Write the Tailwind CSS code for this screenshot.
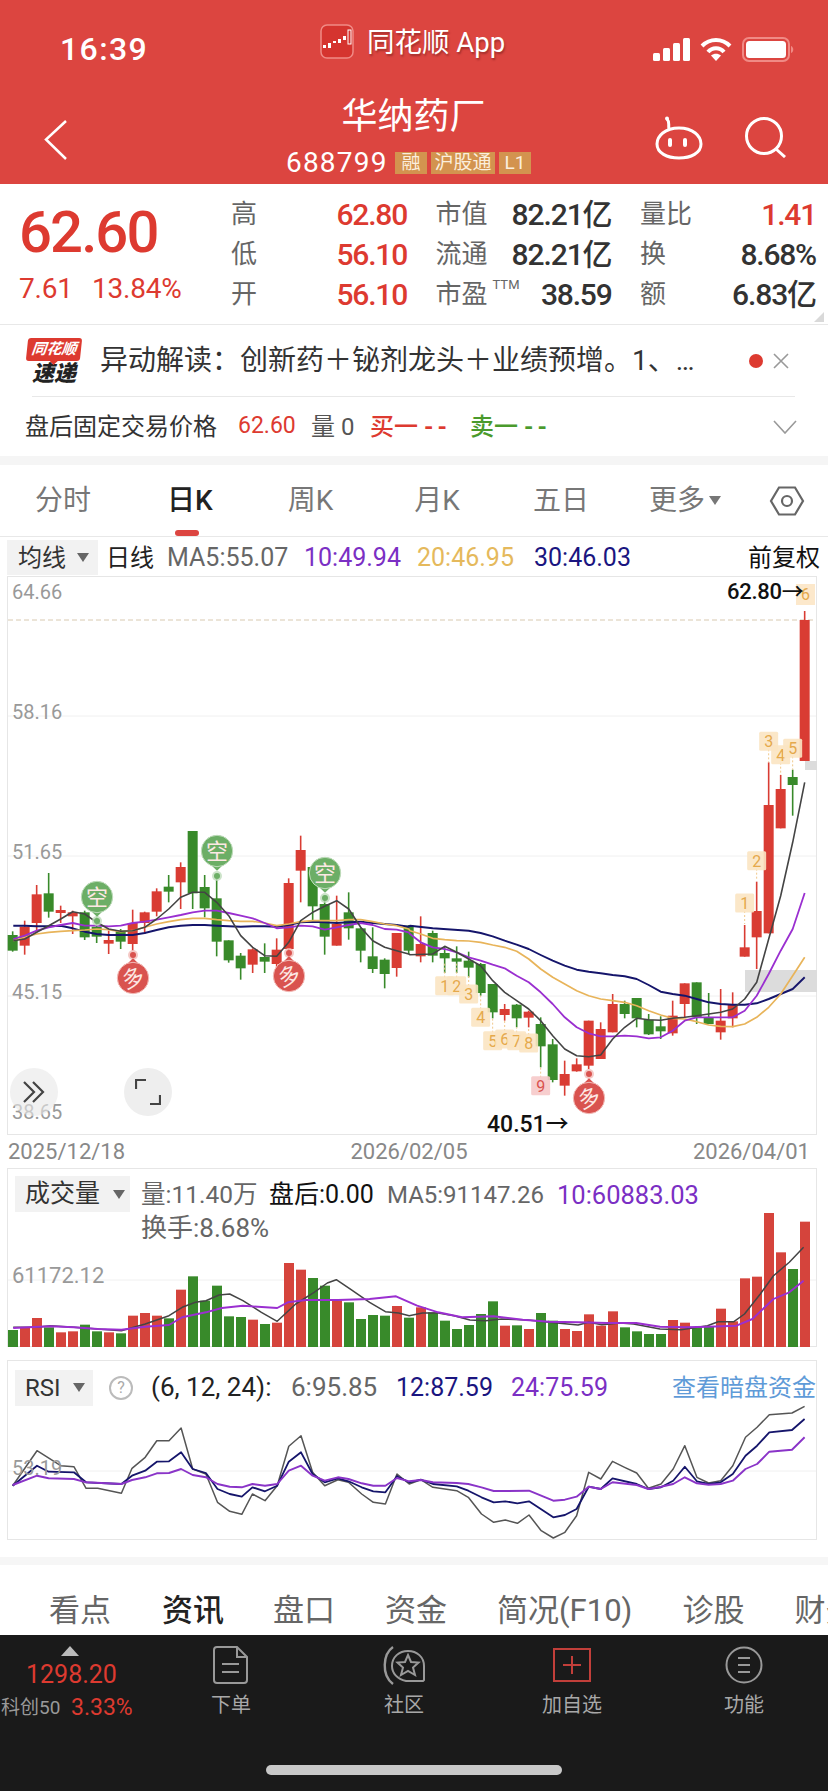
<!DOCTYPE html>
<html lang="zh-CN">
<head>
<meta charset="UTF-8">
<meta name="viewport" content="width=device-width, initial-scale=1.0">
<title>华纳药厂</title>
<script src="https://cdn.jsdelivr.net/npm/@tailwindcss/browser@4"></script>
</head>
<body class="bg-white w-[828px] h-[1792px] overflow-hidden [font-family:Roboto,'Noto_Sans_CJK_SC',sans-serif] text-[#333]">

<!-- 顶部红色区域 -->
<header class="bg-[#dc4540] h-[184px] text-white">
  <div class="flex h-[90px]">
    <div class="w-[320px] pl-[60px] pt-[30px] text-[32px] leading-[38px] font-medium tracking-[1.4px]">16:39</div>
    <div class="w-[333px] flex items-start pt-[24px] gap-[13px]">
      <svg width="34" height="35" viewBox="0 0 34 35">
        <rect x="1" y="1" width="32" height="33" rx="6" fill="#d5342f" stroke="#f08a85" stroke-width="1.5"/>
        <g fill="#fff"><rect x="3" y="21" width="3" height="3"/><rect x="8" y="19" width="3" height="5"/><rect x="13" y="17" width="3" height="2"/><rect x="18" y="15" width="3" height="4"/><rect x="23" y="12" width="3" height="4"/></g>
        <rect x="28" y="6" width="3" height="14" fill="none" stroke="#fff" stroke-width="1"/>
      </svg>
      <div class="text-[27.5px] leading-[38px] [text-shadow:1px_2px_2px_rgba(90,20,20,0.45)]">同花顺 App</div>
    </div>
    <div class="flex items-start pt-[38px] gap-[10px]">
      <svg width="37" height="23" viewBox="0 0 37 23" fill="#fff">
        <rect x="0" y="15" width="7" height="8" rx="1.5"/><rect x="10" y="10" width="7" height="13" rx="1.5"/><rect x="20" y="5" width="7" height="18" rx="1.5"/><rect x="30" y="0" width="7" height="23" rx="1.5"/>
      </svg>
      <svg width="32" height="23" viewBox="0 0 32 23" fill="none" stroke="#fff" stroke-width="4">
        <path d="M2 8 C10 0 22 0 30 8"/><path d="M8 14 C12 9 20 9 24 14"/><path d="M16 23 L11 17.5 C14 15 18 15 21 17.5 Z" fill="#fff" stroke="none"/>
      </svg>
      <svg width="53" height="25" viewBox="0 0 53 25" class="-mt-px">
        <rect x="1" y="1" width="46" height="23" rx="6" fill="none" stroke="#f08a85" stroke-width="2"/>
        <rect x="4" y="4" width="40" height="17" rx="3.5" fill="#fff"/>
        <path d="M49 9 C52 10 52 15 49 16 Z" fill="#f08a85"/>
      </svg>
    </div>
  </div>
  <div class="flex h-[94px]">
    <div class="w-[286px] pl-[44px] pt-[30px]">
      <svg width="24" height="40" viewBox="0 0 24 40" fill="none" stroke="#fff" stroke-width="2.5"><path d="M22 1 L2 19.5 L22 39"/></svg>
    </div>
    <div class="w-[245px] flex flex-col items-center">
      <div class="text-[36px] leading-[44px] ml-[10px] mt-[5px]">华纳药厂</div>
      <div class="flex items-center mt-[13px] h-[22px] text-[28px]">
        <span class="w-[109px] leading-[22px] tracking-[1.2px]">688799</span>
        <span class="flex items-center justify-center bg-[#d3934f] w-[32px] h-[22px] mr-[4px] text-[19px] text-[#fbeedd]">融</span>
        <span class="flex items-center justify-center bg-[#d3934f] w-[64px] h-[22px] mr-[4px] text-[19px] text-[#fbeedd]">沪股通</span>
        <span class="flex items-center justify-center bg-[#d3934f] w-[32px] h-[22px] text-[19px] text-[#fbeedd]">L1</span>
      </div>
    </div>
    <div class="flex items-start pl-[124px] pt-[26px] gap-[42px]">
      <svg width="48" height="44" viewBox="0 0 48 44" fill="none" stroke="#fff" stroke-width="3">
        <path d="M14 13 C13 8 15 6 12 3"/><circle cx="12" cy="2.5" r="2" fill="#fff" stroke="none"/>
        <path d="M24 12 C38 12 46 20 46 28 C46 37 36 42 24 42 C12 42 2 37 2 28 C2 20 10 12 24 12 Z"/>
        <rect x="13" y="22" width="4" height="9" rx="2" fill="#fff" stroke="none"/><rect x="28" y="22" width="4" height="9" rx="2" fill="#fff" stroke="none"/>
      </svg>
      <svg width="42" height="42" viewBox="0 0 42 42" fill="none" stroke="#fff" stroke-width="3"><circle cx="19" cy="20" r="17.5"/><path d="M31 33 L40 41"/></svg>
    </div>
  </div>
</header>

<!-- 报价 -->
<section class="relative flex h-[141px] border-b border-[#e8e8e8] pt-[10px]">
  <div class="w-[231px] pl-[19px]">
    <div class="text-[#dd3a30] text-[58px] leading-[56px] font-medium mt-[10px] tracking-[-1.9px]">62.60</div>
    <div class="flex text-[#dd3a30] text-[28px] leading-[30px] mt-[14px] tracking-[-0.2px]">
      <span class="w-[73px]">7.61</span><span>13.84%</span>
    </div>
  </div>
  <div class="grid grid-cols-[176px_176px_176px] gap-x-[28.5px] auto-rows-[40px] items-center text-[30px]">
    <div class="flex justify-between items-center"><span class="text-[26px] text-[#666]">高</span><span class="text-[#dd3a30] font-medium tracking-[-1.2px]">62.80</span></div>
    <div class="flex justify-between items-center"><span class="text-[26px] text-[#666]">市值</span><span class="font-medium tracking-[-1.1px]">82.21亿</span></div>
    <div class="flex justify-between items-center"><span class="text-[26px] text-[#666]">量比</span><span class="text-[#dd3a30] font-medium tracking-[-1.2px]">1.41</span></div>
    <div class="flex justify-between items-center"><span class="text-[26px] text-[#666]">低</span><span class="text-[#dd3a30] font-medium tracking-[-1.2px]">56.10</span></div>
    <div class="flex justify-between items-center"><span class="text-[26px] text-[#666]">流通</span><span class="font-medium tracking-[-1.1px]">82.21亿</span></div>
    <div class="flex justify-between items-center"><span class="text-[26px] text-[#666]">换</span><span class="font-medium tracking-[-1.2px]">8.68%</span></div>
    <div class="flex justify-between items-center"><span class="text-[26px] text-[#666]">开</span><span class="text-[#dd3a30] font-medium tracking-[-1.2px]">56.10</span></div>
    <div class="flex justify-between items-center"><span class="text-[26px] text-[#666]">市盈<sup class="text-[13px] ml-[5px] -top-[14px]">TTM</sup></span><span class="font-medium tracking-[-1.2px]">38.59</span></div>
    <div class="flex justify-between items-center"><span class="text-[26px] text-[#666]">额</span><span class="font-medium tracking-[-1.1px]">6.83亿</span></div>
  </div>
  <div class="absolute right-[4px] bottom-[2px] border-l-[10px] border-b-[10px] border-l-transparent border-b-[#d9d9d9]"></div>
</section>

<!-- 异动解读 -->
<section class="flex items-center h-[71px]">
  <div class="w-[100px] pl-[27px] pt-[1px]">
    <div class="relative w-[54px] h-[23px] bg-[#dd3a30] rounded-[3px] -skew-x-6 text-white text-[15px] leading-[23px] italic font-bold text-center">同花顺
      <div class="absolute left-[24px] -bottom-[4px] border-x-[4px] border-t-[4px] border-x-transparent border-t-[#dd3a30]"></div>
    </div>
    <div class="w-[54px] mt-[2px] text-center text-[#222] text-[22px] leading-[22px] italic font-black">速递</div>
  </div>
  <div class="w-[640px] text-[28px] leading-[36px] text-[#333] whitespace-nowrap overflow-hidden">异动解读：创新药＋铋剂龙头＋业绩预增。1、…</div>
  <div class="w-[14px] h-[14px] rounded-full bg-[#dd3a30] ml-[9px]"></div>
  <svg class="ml-[10px]" width="16" height="16" viewBox="0 0 16 16" fill="none" stroke="#999" stroke-width="1.6"><path d="M1 1 L15 15 M15 1 L1 15"/></svg>
</section>
<div class="h-px bg-[#e8e8e8] ml-[32px] w-[763px]"></div>

<!-- 盘后 -->
<section class="flex items-center h-[59px] text-[24px]">
  <span class="ml-[25px] w-[213px] text-[#333]">盘后固定交易价格</span>
  <span class="w-[73px] text-[#dd3a30] text-[23px]">62.60</span>
  <span class="w-[59px] text-[#555]">量 0</span>
  <span class="w-[100px] text-[#dd3a30] font-medium">买一 <span class="tracking-[4px] font-bold">--</span></span>
  <span class="w-[303px] text-[#4a9a2c] font-medium">卖一 <span class="tracking-[4px] font-bold">--</span></span>
  <svg width="24" height="14" viewBox="0 0 24 14" fill="none" stroke="#999" stroke-width="1.6"><path d="M1 1 L12 13 L23 1"/></svg>
</section>
<div class="h-[9px] bg-[#f5f5f5]"></div>

<!-- 周期切换 -->
<nav class="relative flex items-center h-[72px] border-b border-[#e8e8e8] text-[28px] text-[#777]">
  <span class="ml-[35px]">分时</span>
  <span class="ml-[76px] text-[#222] font-medium">日K</span>
  <span class="ml-[75px]">周K</span>
  <span class="ml-[81px]">月K</span>
  <span class="ml-[73px]">五日</span>
  <span class="ml-[60px]">更多</span>
  <span class="ml-[4px] border-x-[6px] border-t-[9px] border-x-transparent border-t-[#777]"></span>
  <svg class="ml-[48px]" width="36" height="30" viewBox="0 0 36 30" fill="none" stroke="#666" stroke-width="2.2"><path d="M10 1.5 H26 L34 15 L26 28.5 H10 L2 15 Z"/><circle cx="18" cy="15" r="5"/></svg>
  <div class="absolute left-[175px] bottom-0 w-[24px] h-[6px] rounded-full bg-[#dc4540]"></div>
</nav>

<!-- 均线行 -->
<div class="flex items-center h-[39px] pt-[2px] text-[25px] whitespace-nowrap">
  <div class="ml-[7px] w-[91px] h-[35px] bg-[#f2f2f2] flex items-center pl-[11px] text-[24px] text-[#333]">均线<span class="ml-[11px] border-x-[6px] border-t-[9px] border-x-transparent border-t-[#666]"></span></div>
  <span class="ml-[8px] w-[48px] text-[24px] text-[#222]">日线</span>
  <span class="ml-[13px] text-[#666] w-[137px]">MA5:55.07</span>
  <span class="text-[#7b2fc4] w-[113px]">10:49.94</span>
  <span class="text-[#e5b95c] w-[117px]">20:46.95</span>
  <span class="text-[#1a1580] w-[214px]">30:46.03</span>
  <span class="text-[24px] text-[#111]">前复权</span>
</div>

<!-- K线图 -->
<div class="relative ml-[7px] w-[810px] h-[559px] text-[20px] text-[#999]">
  <svg id="kline" class="absolute inset-0" width="810" height="559" viewBox="7 577 810 559"></svg>
  <span class="absolute left-[5px] top-[4px] leading-[24px]">64.66</span>
  <span class="absolute left-[5px] top-[124px] leading-[24px]">58.16</span>
  <span class="absolute left-[5px] top-[264px] leading-[24px]">51.65</span>
  <span class="absolute left-[5px] top-[404px] leading-[24px]">45.15</span>
  <span class="absolute left-[5px] top-[524px] leading-[24px]">38.65</span>
  <span class="absolute left-[720px] top-[2px] text-[22px] leading-[28px] text-[#111] font-medium tracking-[-0.3px]">62.80→</span>
  <span class="absolute left-[480px] top-[535px] text-[23px] leading-[28px] text-[#111] font-medium">40.51→</span>
  <div class="absolute left-[3px] top-[492px] w-[48px] h-[48px] rounded-full bg-[#e8e8e8]/60 flex items-center justify-center">
    <svg width="24" height="24" viewBox="0 0 24 24" fill="none" stroke="#444" stroke-width="2.2"><path d="M2 2 L12 12 L2 22 M11 2 L21 12 L11 22"/></svg>
  </div>
  <div class="absolute left-[117px] top-[492px] w-[48px] h-[48px] rounded-full bg-[#eeeeee] flex items-center justify-center">
    <svg width="26" height="26" viewBox="0 0 26 26" fill="none" stroke="#444" stroke-width="2.2"><path d="M1 10 V1 H11 M25 16 V25 H15"/></svg>
  </div>
</div>

<div class="flex justify-between ml-[8px] w-[802px] h-[33px] items-center text-[22px] text-[#888]">
  <span>2025/12/18</span><span>2026/02/05</span><span>2026/04/01</span>
</div>

<!-- 成交量 -->
<div class="relative ml-[7px] w-[810px] h-[179px]">
  <svg id="volume" class="absolute inset-0" width="810" height="179" viewBox="7 1169 810 179"></svg>
  <div class="relative flex pt-[8px] pl-[8px] whitespace-nowrap">
    <div class="w-[115px] h-[36px] bg-[#f2f2f2] flex items-center pl-[10px] text-[25px] text-[#333]">成交量<span class="ml-[13px] border-x-[6px] border-t-[9px] border-x-transparent border-t-[#666]"></span></div>
    <div class="ml-[11px] pt-[1px]">
      <div class="flex items-center h-[36px]">
        <span class="w-[128px] text-[24.5px] text-[#666]">量:11.40万</span>
        <span class="w-[118px] text-[25px] text-[#111]">盘后:0.00</span>
        <span class="w-[170px] text-[24px] text-[#666]">MA5:91147.26</span>
        <span class="text-[25.5px] text-[#7b2fc4]">10:60883.03</span>
      </div>
      <div class="text-[26px] leading-[30px] text-[#666]">换手:8.68%</div>
    </div>
  </div>
  <span class="absolute left-[5px] top-[94px] text-[22px] leading-[28px] text-[#999]">61172.12</span>
</div>
<div class="h-[13px]"></div>

<!-- RSI -->
<div class="relative ml-[7px] w-[810px] h-[180px]">
  <svg id="rsi" class="absolute inset-0" width="810" height="180" viewBox="7 1361 810 180"></svg>
  <span class="absolute left-[5px] top-[94px] text-[20px] leading-[28px] text-[#999]">53.19</span>
  <div class="relative flex items-center pt-[8px] pl-[8px] text-[25px] whitespace-nowrap">
    <div class="w-[78px] h-[36px] bg-[#f2f2f2] flex items-center pl-[10px] text-[24px] text-[#333]">RSI<span class="ml-[12px] border-x-[6px] border-t-[9px] border-x-transparent border-t-[#666]"></span></div>
    <span class="ml-[16px] w-[24px] h-[24px] rounded-full border-2 border-[#bbb] text-[#aaa] text-[16px] leading-[20px] text-center">?</span>
    <span class="ml-[18px] w-[140px] text-[26px] text-[#222]">(6, 12, 24):</span>
    <span class="w-[105px] text-[26px] text-[#666]">6:95.85</span>
    <span class="w-[115px] text-[#1a1580]">12:87.59</span>
    <span class="w-[161px] text-[#7b2fc4]">24:75.59</span>
    <span class="text-[24px] text-[#5f9bd8]">查看暗盘资金</span>
  </div>
</div>

<div class="h-[17px]"></div>
<div class="h-[8px] bg-[#f6f6f6]"></div>

<!-- 资讯栏 -->
<nav class="flex items-center h-[70px] text-[31px] text-[#666] whitespace-nowrap overflow-hidden pt-[22px]">
  <span class="ml-[49px]">看点</span>
  <span class="ml-[51px] text-[#222] font-medium">资讯</span>
  <span class="ml-[49px]">盘口</span>
  <span class="ml-[50px]">资金</span>
  <span class="ml-[50px]">简况(F10)</span>
  <span class="ml-[50px]">诊股</span>
  <span class="ml-[50px]">财务</span>
</nav>

<!-- 底部工具栏 -->
<footer class="relative bg-[#1a1a1a] h-[156px] text-[#a8a8a8]">
  <div class="flex pt-[11px]">
    <div class="w-[191px] flex flex-col items-start">
      <div class="ml-[61px] border-x-[9px] border-b-[10px] border-x-transparent border-b-[#bbbbbb]"></div>
      <div class="ml-[26px] text-[#dd3a30] text-[25px] leading-[30px] mt-[4px]">1298.20</div>
      <div class="flex items-center ml-[1px] mt-[3px]">
        <span class="w-[70px] text-[19px] leading-[30px] text-[#999]">科创50</span><span class="text-[#dd3a30] text-[23px] leading-[30px]">3.33%</span>
      </div>
    </div>
    <div class="w-[80px] flex flex-col items-center">
      <svg width="36" height="38" viewBox="0 0 36 38" fill="none" stroke="#999" stroke-width="2">
        <path d="M4 1 H24 L34 11 V34 Q34 37 31 37 H4 Q1 37 1 34 V4 Q1 1 4 1 Z M24 1 V11 H34"/><path d="M9 18 H26 M9 26 H26"/>
      </svg>
      <span class="mt-[7px] text-[20px] leading-[28px]">下单</span>
    </div>
    <div class="w-[80px] ml-[93px] flex flex-col items-center">
      <svg width="44" height="39" viewBox="0 0 44 39" fill="none" stroke="#999" stroke-width="2">
        <path d="M11 1 C1 8 -1 29 11 38" stroke-width="2.4"/>
        <path d="M41 35 H24 C15 33 10 27 10 20 C10 11 17 5 26 5 C35 5 42 11 42 20 V34 Z"/>
        <path d="M26 9 L29 16 L36.5 16.5 L31 21.5 L33 29 L26 25 L19 29 L21 21.5 L15.5 16.5 L23 16 Z"/>
      </svg>
      <span class="mt-[6px] text-[20px] leading-[28px]">社区</span>
    </div>
    <div class="w-[80px] ml-[88px] flex flex-col items-center">
      <svg class="mt-[2px]" width="38" height="34" viewBox="0 0 38 34" fill="none" stroke="#c23f3a" stroke-width="2">
        <rect x="1" y="1" width="36" height="32"/><path d="M19 8 V26 M10 17 H28"/>
      </svg>
      <span class="mt-[9px] text-[20px] leading-[28px]">加自选</span>
    </div>
    <div class="w-[80px] ml-[92px] flex flex-col items-center">
      <svg width="38" height="38" viewBox="0 0 38 38" fill="none" stroke="#999" stroke-width="2">
        <circle cx="19" cy="19" r="17.5"/><path d="M13 12 H25 M13 19 H25 M13 26 H25"/>
      </svg>
      <span class="mt-[7px] text-[20px] leading-[28px]">功能</span>
    </div>
  </div>
  <div class="absolute left-[266px] top-[130px] w-[296px] h-[10px] rounded-full bg-[#c8c8c8]"></div>
</footer>

<script>
const NS = 'http://www.w3.org/2000/svg';
const RED = '#d93c33', GREEN = '#388a2a';

function el(svg, tag, attrs, text) {
  const n = document.createElementNS(NS, tag);
  for (const k in attrs) n.setAttribute(k, attrs[k]);
  if (text) n.textContent = text;
  svg.appendChild(n);
  return n;
}
function polyline(svg, pts, color, w) {
  el(svg, 'polyline', { points: pts.map(p => p[0].toFixed(1) + ',' + p[1].toFixed(1)).join(' '), fill: 'none', stroke: color, 'stroke-width': w, 'stroke-linejoin': 'round' });
}

// K线，y 值取自参考图的两段放大图
const y1 = v => v / 3 + 800, y2 = v => v / 3 + 700;
const candles = [
  [397,408,455,458,'g'],[365,383,440,467,'r'],[258,286,372,395,'r'],[222,283,338,356,'g'],[320,333,342,372,'r'],
  [335,340,352,405,'r'],[335,340,415,423,'g'],[355,383,413,432,'g'],[395,423,434,465,'r'],[390,395,428,450,'g'],
  [332,372,435,455,'r'],[338,340,372,405,'r'],[268,277,338,352,'r'],[228,263,278,310,'g'],[190,204,250,330,'r'],
  [96,96,283,330,'g'],[228,264,328,355,'g'],[240,298,428,472,'g'],[424,424,484,491,'g'],[462,470,508,542,'g'],
  [448,451,497,522,'r'],[433,474,488,522,'g'],[418,452,495,510,'r'],[238,252,450,480,'r'],[110,153,215,310,'r'],
  [204,204,322,365,'g'],[290,315,413,467,'g'],[290,375,440,440,'r'],[280,340,388,422,'g'],[385,388,455,490,'g'],
  [385,472,510,522,'g'],[478,482,525,568,'g'],[402,402,507,533,'r']
].map(c => [y1(c[0]), y1(c[1]), y1(c[2]), y1(c[3]), c[4]]).concat([
  [678,680,755,765,'g'],[652,735,772,790,'r'],[695,702,770,790,'g'],[742,762,778,822,'g'],[742,778,788,822,'g'],
  [758,785,806,835,'g'],[792,795,882,890,'g'],[855,855,940,958,'g'],[915,930,948,965,'r'],[915,917,958,985,'g'],
  [935,938,956,985,'r'],[955,975,1042,1105,'g'],[1020,1036,1143,1150,'g'],[1085,1125,1160,1190,'r'],[1078,1096,1117,1118,'r'],
  [965,965,1100,1110,'r'],[970,990,1080,1080,'r'],[885,915,1000,1000,'r'],[905,915,945,958,'g'],[897,897,958,985,'g'],
  [945,962,1006,1008,'g'],[952,982,997,1020,'g'],[905,950,1003,1010,'r'],[853,853,915,955,'r'],[850,850,955,975,'g'],
  [882,955,975,975,'g'],[870,965,1000,1022,'r'],[880,915,958,985,'r'],[678,745,773,773,'r'],[548,636,715,810,'r'],
  [190,318,703,703,'r'],[228,270,388,388,'r'],[212,234,258,350,'g']
].map(c => [y2(c[0]), y2(c[1]), y2(c[2]), y2(c[3]), c[4]]));
candles.push([612, 621, 762, 762, 'r']);

const ma5L = [[40,425],[74,420],[110,400],[146,380],[182,360],[218,338],[254,345],[290,370],[326,390],[362,397],[398,395],[434,385],[470,360],[506,330],[542,295],[578,280],[614,280],[650,310],[686,350],[722,410],[758,445],[794,470],[830,472],[866,430],[902,365],[938,340],[974,322],[1010,305],[1046,330],[1082,385],[1118,425],[1154,445],[1190,455],[1226,465]];
const ma5R = [[0,767],[68,765],[104,742],[140,760],[176,780],[212,800],[248,845],[284,880],[320,905],[356,930],[392,965],[428,1010],[464,1050],[500,1070],[536,1073],[572,1068],[608,1020],[644,985],[680,958],[716,962],[752,964],[788,958],[824,955],[860,950],[896,945],[932,940],[968,930],[1004,900],[1040,850],[1076,720],[1112,590],[1148,430],[1184,250]];
const ma10L = [[40,420],[74,410],[110,395],[146,385],[182,378],[218,372],[254,380],[290,380],[326,382],[362,380],[398,372],[434,368],[470,362],[506,355],[542,348],[578,340],[614,335],[650,335],[686,342],[722,350],[758,358],[794,372],[830,388],[866,385],[902,380],[938,382],[974,392],[1010,385],[1046,378],[1082,372],[1118,378],[1154,390],[1190,392],[1226,400]];
const ma10R = [[0,705],[32,730],[68,745],[104,750],[140,760],[176,775],[212,785],[248,797],[284,808],[320,830],[356,850],[392,880],[428,915],[464,955],[500,985],[536,1003],[572,1012],[608,1012],[644,1010],[680,1012],[716,1018],[752,1015],[788,995],[824,965],[860,955],[896,955],[932,955],[968,955],[1004,935],[1040,890],[1076,825],[1112,755],[1148,690],[1184,582]];
const ma20L = [[40,425],[74,415],[110,405],[146,400],[182,397],[218,395],[254,393],[290,390],[326,392],[362,398],[398,395],[434,385],[470,375],[506,368],[542,362],[578,358],[614,358],[650,362],[686,365],[722,367],[758,367],[794,372],[830,380],[866,375],[902,368],[938,365],[974,365],[1010,365],[1046,362],[1082,362],[1118,368],[1154,375],[1190,380],[1226,390]];
const ma20R = [[0,695],[32,705],[68,718],[104,722],[140,725],[176,726],[212,730],[248,738],[284,745],[320,757],[356,780],[392,810],[428,835],[464,855],[500,875],[536,890],[572,900],[608,905],[644,910],[680,920],[716,935],[752,948],[788,958],[824,960],[860,968],[896,978],[932,982],[968,983],[1004,975],[1040,955],[1076,925],[1112,885],[1148,830],[1184,775]];
const ma30L = [[40,380],[74,380],[110,382],[146,382],[182,380],[218,388],[254,398],[290,405],[326,408],[362,408],[398,408],[434,402],[470,393],[506,385],[542,380],[578,378],[614,378],[650,380],[686,382],[722,383],[758,382],[794,382],[830,383],[866,378],[902,370],[938,368],[974,370],[1010,372],[1046,370],[1082,368],[1118,372],[1154,375],[1190,378],[1226,383]];
const ma30R = [[0,680],[68,688],[176,695],[212,702],[248,712],[284,725],[320,737],[356,750],[392,768],[428,785],[464,800],[500,812],[536,818],[572,823],[608,828],[644,832],[680,840],[716,858],[752,878],[788,885],[824,890],[860,900],[896,910],[932,915],[968,917],[1004,917],[1040,913],[1076,900],[1112,885],[1148,870],[1184,835]];
const join = (l, r) => l.map(p => [p[0] / 3, p[1] / 3 + 800]).concat(r.map(p => [p[0] / 3 + 410, p[1] / 3 + 700]));

const k = document.getElementById('kline');
el(k, 'rect', { x: 7.5, y: 577.5, width: 809, height: 558, fill: 'none', stroke: '#e6e6e6', 'stroke-width': 1 });
[717, 857, 997].forEach(y => el(k, 'line', { x1: 8, x2: 816, y1: y, y2: y, stroke: '#f0f0f0', 'stroke-width': 1 }));
el(k, 'line', { x1: 8, x2: 816, y1: 621, y2: 621, stroke: '#d8c9b0', 'stroke-width': 1, 'stroke-dasharray': '5 3' });
el(k, 'rect', { x: 745, y: 971, width: 72, height: 22, fill: '#dcdcdc' });
el(k, 'rect', { x: 805, y: 762, width: 12, height: 9, fill: '#dcdcdc' });

candles.forEach((c, i) => {
  const x = 12.67 + 12 * i, color = c[4] === 'r' ? RED : GREEN;
  el(k, 'line', { x1: x, x2: x, y1: c[0], y2: c[3], stroke: color, 'stroke-width': 1.6 });
  el(k, 'rect', { x: x - 5, y: c[1], width: 10, height: Math.max(c[2] - c[1], 1.5), fill: color });
});

polyline(k, join(ma30L, ma30R), '#15156b', 1.9);
polyline(k, join(ma20L, ma20R), '#e8b45a', 1.7);
polyline(k, join(ma10L, ma10R), '#9a2fd0', 1.8);
polyline(k, join(ma5L, ma5R), '#444444', 1.6);

// 九转序号
function tag(cx, cy, n, stemTo, pink) {
  const x = cx / 3 + 410, y = cy / 3 + 700;
  if (stemTo) el(k, 'line', { x1: x, x2: x, y1: y, y2: stemTo / 3 + 700, stroke: '#f0c88a', 'stroke-width': 1, 'stroke-dasharray': '2 2' });
  el(k, 'rect', { x: x - 9.5, y: y - 9.5, width: 19, height: 19, rx: 1.5, fill: pink ? '#f6c9c9' : '#fbe4c2', 'fill-opacity': 0.9 });
  el(k, 'text', { x: x, y: y + 6, 'text-anchor': 'middle', 'font-size': 16, 'font-family': 'Roboto', fill: pink ? '#d9534f' : '#e5a94c' }, n);
}
tag(1004,612,'1',675); tag(1040,485,'2',545); tag(1076,127,'3',190); tag(1112,167,'4',228); tag(1148,148,'5',212);
tag(104,860,'1',790); tag(140,860,'2',790); tag(176,885,'3',825); tag(212,955,'4',890); tag(248,1025,'5',958);
tag(284,1020,'6',965); tag(320,1025,'7',985); tag(356,1032,'8',985); tag(392,1160,'9',1105,true);
el(k, 'rect', { x: 796, y: 585, width: 19, height: 21, fill: '#fbe4c2', 'fill-opacity': 0.85 });
el(k, 'text', { x: 805.5, y: 601, 'text-anchor': 'middle', 'font-size': 16, 'font-family': 'Roboto', fill: '#e5a94c' }, '6');

// 多空标记：dir = 1 气泡在点的上方，-1 在下方
function pin(x, cy, dotY, ch, color, ring, dir) {
  const r = 15.7, tip = cy + dir * (r + 4);
  el(k, 'circle', { cx: x, cy: dotY, r: 5, fill: ring, 'fill-opacity': 0.8 });
  el(k, 'circle', { cx: x, cy: dotY, r: 3, fill: color });
  el(k, 'path', { d: `M${x - 8} ${cy + dir * 12} L${x} ${tip} L${x + 8} ${cy + dir * 12} Z`, fill: color });
  el(k, 'circle', { cx: x, cy: cy, r: r, fill: color, stroke: ring, 'stroke-width': 1 });
  const t = el(k, 'text', { x: x, y: cy + 8, 'text-anchor': 'middle', 'font-size': 22, 'font-family': 'Noto Sans CJK SC', fill: '#fde8e4' }, ch);
  if (ch === '多') t.setAttribute('transform', `rotate(-20 ${x} ${cy})`);
}
pin(97, 898, 922, '空', '#6cae66', '#bfdcbb', 1);
pin(217, 852, 877, '空', '#6cae66', '#bfdcbb', 1);
pin(325, 874, 899, '空', '#6cae66', '#bfdcbb', 1);
pin(133, 979, 956, '多', '#d9534f', '#f3bcb8', -1);
pin(289, 977, 954, '多', '#d9534f', '#f3bcb8', -1);
pin(589, 1099, 1075, '多', '#d9534f', '#f3bcb8', -1);

// 成交量
const vol = document.getElementById('volume');
const volData = [[513,'g'],[505,'r'],[477,'r'],[505,'g'],[520,'r'],[517,'r'],[497,'g'],[517,'g'],[520,'r'],[523,'g'],[470,'r'],[462,'r'],[470,'r'],[478,'g'],[392,'r'],[352,'g'],[425,'g'],[380,'g'],[472,'g'],[474,'g'],[482,'r'],[495,'g'],[491,'r'],[312,'r'],[332,'r'],[357,'g'],[380,'g'],[425,'r'],[430,'g'],[480,'g'],[468,'g'],[470,'g'],[441,'r'],[476,'g'],[445,'r'],[460,'g'],[485,'g'],[510,'g'],[498,'g'],[465,'g'],[427,'g'],[500,'r'],[499,'g'],[510,'r'],[462,'g'],[485,'g'],[510,'r'],[516,'r'],[466,'r'],[500,'r'],[457,'r'],[505,'g'],[517,'g'],[525,'g'],[525,'g'],[483,'r'],[491,'r'],[505,'g'],[502,'g'],[449,'r'],[487,'r'],[358,'r'],[353,'r'],[162,'r'],[280,'r'],[330,'g'],[188,'r']];
const vz = p => [p[0] / 1.894, p[1] / 3 + 1160];
el(vol, 'rect', { x: 7.5, y: 1169.5, width: 809, height: 178, fill: 'none', stroke: '#e6e6e6', 'stroke-width': 1 });
el(vol, 'line', { x1: 8, x2: 816, y1: 1281, y2: 1281, stroke: '#f0f0f0', 'stroke-width': 1 });
volData.forEach((d, i) => {
  const top = d[0] / 3 + 1160;
  el(vol, 'rect', { x: 8 + 12 * i, y: top, width: 10, height: 1348 - top, fill: d[1] === 'r' ? '#d5443c' : GREEN });
});
polyline(vol, [[25,505],[70,505],[95,500],[140,505],[185,510],[230,515],[275,495],[320,470],[345,445],[370,430],[390,425],[415,408],[435,405],[460,425],[495,460],[525,487],[560,435],[595,400],[620,372],[637,362],[665,392],[700,430],[730,458],[755,462],[775,470],[800,462],[830,462],[860,470],[890,483],[920,485],[950,480],[1000,483],[1040,490],[1095,498],[1115,490],[1140,497],[1175,492],[1200,495],[1250,510],[1290,512],[1340,500],[1360,488],[1390,488],[1410,465],[1440,405],[1465,350],[1495,310],[1522,265]].map(vz), '#444444', 1.5);
polyline(vol, [[25,507],[95,502],[140,505],[185,510],[230,512],[275,503],[320,498],[345,475],[390,460],[420,447],[460,440],[525,447],[545,430],[580,423],[640,423],[700,420],[750,412],[790,440],[830,460],[875,475],[935,472],[990,482],[1040,488],[1095,490],[1150,492],[1205,492],[1250,503],[1300,505],[1340,503],[1395,500],[1425,480],[1465,420],[1495,400],[1522,365]].map(vz), '#9a2fd0', 1.9);

// RSI
const rsi = document.getElementById('rsi');
const rz = p => [p[0] / 1.894, p[1] / 3 + 1350];
el(rsi, 'rect', { x: 7.5, y: 1361.5, width: 809, height: 179, fill: 'none', stroke: '#e6e6e6', 'stroke-width': 1 });
el(rsi, 'line', { x1: 8, x2: 816, y1: 1472, y2: 1472, stroke: '#f0f0f0', 'stroke-width': 1 });
polyline(rsi, [[24,410],[70,305],[115,350],[140,353],[163,418],[185,418],[230,433],[250,358],[275,325],[297,275],[320,275],[343,237],[365,360],[390,375],[412,460],[435,487],[458,496],[478,435],[502,455],[525,410],[547,292],[570,260],[592,370],[615,410],[640,392],[660,400],[685,435],[707,460],[730,465],[752,375],[775,405],[797,392],[820,415],[865,425],[887,445],[912,495],[935,520],[957,513],[980,523],[1002,498],[1025,545],[1048,567],[1070,550],[1092,500],[1115,370],[1138,390],[1160,337],[1183,355],[1206,372],[1228,418],[1252,405],[1275,360],[1297,290],[1320,385],[1342,402],[1365,395],[1388,350],[1412,265],[1434,235],[1457,197],[1500,192],[1524,172]].map(rz), '#555555', 1.5);
polyline(rsi, [[24,410],[70,350],[92,368],[140,370],[163,400],[230,405],[250,380],[275,365],[297,338],[320,337],[343,310],[365,360],[390,372],[412,420],[435,435],[458,443],[478,415],[502,427],[525,410],[547,338],[570,310],[592,375],[615,400],[640,388],[660,397],[685,415],[707,427],[730,430],[752,382],[775,400],[797,392],[820,405],[865,412],[887,425],[912,445],[935,460],[957,457],[980,463],[1002,457],[1048,505],[1070,498],[1092,480],[1115,413],[1138,420],[1160,388],[1206,405],[1228,420],[1252,415],[1275,395],[1297,353],[1320,397],[1342,405],[1365,400],[1388,375],[1412,320],[1434,290],[1457,250],[1500,243],[1524,210]].map(rz), '#15156b', 1.8);
polyline(rsi, [[24,408],[70,380],[92,388],[140,390],[163,400],[230,405],[250,393],[275,385],[297,373],[320,372],[343,360],[365,378],[390,385],[412,405],[435,413],[458,415],[478,405],[502,410],[525,405],[547,365],[570,350],[592,380],[615,395],[640,385],[660,390],[685,403],[707,410],[730,410],[752,387],[775,397],[797,393],[820,400],[865,402],[887,405],[912,415],[935,426],[957,426],[1002,425],[1048,455],[1070,452],[1092,443],[1115,413],[1138,420],[1160,400],[1206,408],[1228,420],[1252,413],[1275,405],[1297,385],[1320,403],[1342,407],[1365,405],[1388,395],[1412,360],[1434,345],[1457,308],[1500,302],[1524,265]].map(rz), '#8a34c8', 1.9);
</script>
</body>
</html>
